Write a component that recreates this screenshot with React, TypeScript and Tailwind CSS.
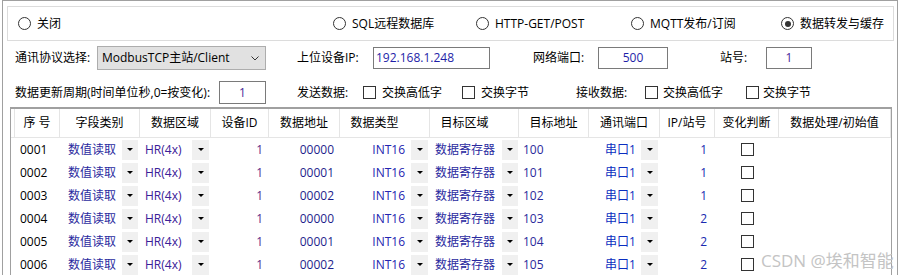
import React from "react";

const COLS =
  "grid grid-cols-[4px_45px_80px_71px_58px_71px_90px_89px_70px_71px_55px_64px_112px]";

const rows = [
  { no: "0001", addr: "00000", target: "100", ip: "1" },
  { no: "0002", addr: "00001", target: "101", ip: "1" },
  { no: "0003", addr: "00002", target: "102", ip: "1" },
  { no: "0004", addr: "00000", target: "103", ip: "2" },
  { no: "0005", addr: "00001", target: "104", ip: "2" },
  { no: "0006", addr: "00002", target: "105", ip: "2" },
];

const Radio = ({ label, checked, className }: { label: string; checked?: boolean; className?: string }) => (
  <div className={"flex items-center " + (className ?? "")}>
    <span className="w-[13px] h-[13px] rounded-full border border-[#333] bg-white flex items-center justify-center">
      {checked && <span className="w-[6px] h-[6px] rounded-full bg-[#333]" />}
    </span>
    <span className="ml-[6px]">{label}</span>
  </div>
);

const Check = ({ className }: { className?: string }) => (
  <span className={"w-[13px] h-[13px] border border-[#333] bg-white shrink-0 " + (className ?? "")} />
);

const DropBtn = ({ w = "w-[16px]" }: { w?: string }) => (
  <span className={w + " h-[20px] bg-[#f0f0f0] flex items-center justify-center shrink-0"}>
    <span className="w-0 h-0 border-x-[3px] border-x-transparent border-t-[3px] border-t-black" />
  </span>
);

const headers: { t: string; c?: string }[] = [
  { t: "" },
  { t: "序 号" },
  { t: "字段类别" },
  { t: "数据区域" },
  { t: "设备ID" },
  { t: "数据地址" },
  { t: "数据类型", c: "pr-[20px]" },
  { t: "目标区域", c: "pr-[19px]" },
  { t: "目标地址" },
  { t: "通讯端口" },
  { t: "IP/站号" },
  { t: "变化判断" },
  { t: "数据处理/初始值" },
];

export default function App() {
  return (
    <div className="relative w-[901px] h-[275px] overflow-hidden bg-white text-[12px] text-black font-['Open_Sans','Noto_Sans_CJK_SC',sans-serif]">
      <div className="ml-[2px] w-[896px] h-[275px] border-l border-r border-t border-[#a0a0a0]">
        {/* mode radios */}
        <div className="mt-[5px] ml-[4px] w-[887px] h-[35px] border border-[#dcdcdc] flex items-center">
          <Radio label="关闭" className="ml-[10px] w-[315px]" />
          <Radio label="SQL远程数据库" className="w-[143px]" />
          <Radio label="HTTP-GET/POST" className="w-[155px]" />
          <Radio label="MQTT发布/订阅" className="w-[150px]" />
          <Radio label="数据转发与缓存" checked />
        </div>

        {/* protocol row */}
        <div className="mt-[5px] h-[24px] pl-[12px] flex items-center">
          <span className="w-[82px]">通讯协议选择:</span>
          <div className="w-[169px] h-[24px] bg-[#e1e1e1] border border-[#adadad] flex items-center justify-between pl-[4px] pr-[6px]">
            <span>ModbusTCP主站/Client</span>
            <svg width="8" height="5" viewBox="0 0 8 5">
              <polyline points="0.5,0.5 4,4 7.5,0.5" fill="none" stroke="#333" strokeWidth="1" />
            </svg>
          </div>
          <span className="ml-[31px] w-[76px]">上位设备IP:</span>
          <div className="w-[117px] h-[22px] border border-[#7a7a7a] flex items-center pl-[2px] text-[#1e1ea8]">
            192.168.1.248
          </div>
          <span className="ml-[43px] w-[65px]">网络端口:</span>
          <div className="w-[70px] h-[22px] border border-[#7a7a7a] flex items-center justify-center text-[#1e1ea8]">
            500
          </div>
          <span className="ml-[52px] w-[46px]">站号:</span>
          <div className="w-[46px] h-[22px] border border-[#7a7a7a] flex items-center justify-center text-[#4b2a9a]">
            1
          </div>
        </div>

        {/* cycle row */}
        <div className="mt-[11px] h-[23px] pl-[12px] flex items-center">
          <span className="w-[204px]">数据更新周期(时间单位秒,0=按变化):</span>
          <div className="w-[47px] h-[23px] border border-[#7a7a7a] flex items-center justify-center text-[#4b2a9a]">
            1
          </div>
          <span className="ml-[31px] w-[66px]">发送数据:</span>
          <Check />
          <span className="ml-[6px]">交换高低字</span>
          <Check className="ml-[20px]" />
          <span className="ml-[6px]">交换字节</span>
          <span className="ml-[47px] w-[69px]">接收数据:</span>
          <Check />
          <span className="ml-[5px]">交换高低字</span>
          <Check className="ml-[23px]" />
          <span className="ml-[4px]">交换字节</span>
        </div>

        {/* table */}
        <div className="mt-[3px] ml-[7px] w-[882px] border-t-2 border-l border-r border-[#a0a0a0]">
          <div className={COLS + " h-[29px] border-b border-[#e5e5e5]"}>
            {headers.map((h, i) => (
              <div
                key={i}
                className={"flex items-center justify-center border-r border-[#e5e5e5] " + (h.c ?? "")}
              >
                {h.t}
              </div>
            ))}
          </div>
          {rows.map((r) => (
            <div key={r.no} className={COLS + " h-[23px]"}>
              <div />
              <div className="flex items-center pl-[5px]">{r.no}</div>
              <div className="flex items-center justify-between pl-[8px] pr-[2px]">
                <span className="text-[#2b2ba0]">数值读取</span>
                <DropBtn />
              </div>
              <div className="flex items-center justify-between pl-[5px] pr-[2px]">
                <span className="text-[#3a2098]">HR(4x)</span>
                <DropBtn w="w-[17px]" />
              </div>
              <div className="flex items-center justify-end pr-[6px] text-[#5a2a8a]">1</div>
              <div className="flex items-center justify-end pr-[6px] text-[#1e1e8c]">{r.addr}</div>
              <div className="flex items-center justify-end pr-[2px]">
                <span className="text-[#2424b0] mr-[6px]">INT16</span>
                <DropBtn w="w-[17px]" />
              </div>
              <div className="flex items-center justify-between pl-[5px] pr-[1px]">
                <span className="text-[#2a2aa0]">数据寄存器</span>
                <DropBtn />
              </div>
              <div className="flex items-center pl-[4px] text-[#2a2a9c]">{r.target}</div>
              <div className="flex items-center justify-between pl-[16px] pr-[2px]">
                <span className="text-[#0a2ec0]">串口1</span>
                <DropBtn w="w-[17px]" />
              </div>
              <div className="flex items-center justify-end pr-[8px] text-[#1a2ab0]">{r.ip}</div>
              <div className="flex items-center justify-center">
                <Check />
              </div>
              <div />
            </div>
          ))}
        </div>
      </div>

      {/* watermark */}
      <div className="absolute left-[761px] top-[248px] text-[17px] text-[#c4c4c4] whitespace-nowrap">
        CSDN @埃和智能
      </div>
    </div>
  );
}
